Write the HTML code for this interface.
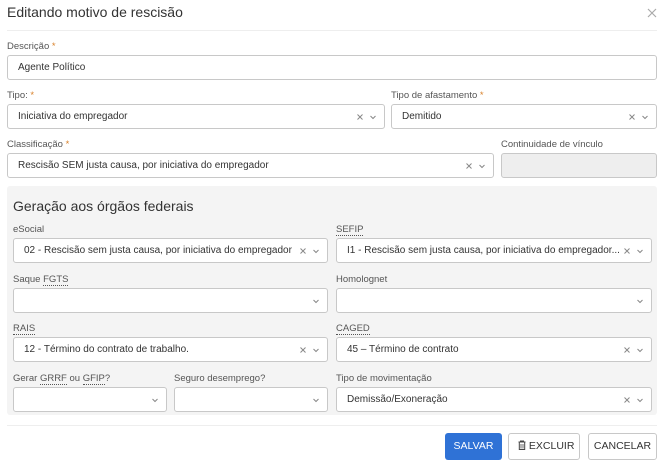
<!DOCTYPE html>
<html><head><meta charset="utf-8"><style>
*{box-sizing:border-box;margin:0;padding:0}
body{width:664px;height:463px;background:#fff;font-family:"Liberation Sans",sans-serif;position:relative;overflow:hidden;color:#333}
.a{position:absolute}
.t{font-size:14px;color:#333}
.l{position:absolute;font-size:9.5px;color:#555;white-space:nowrap}
.l b{color:#d9822b;font-weight:normal}
.u{border-bottom:1px dotted #555}
.i{position:absolute;height:25px;background:#fff;border:1px solid #c8c8c8;border-radius:3px;font-size:10px;color:#333;padding:0 10px;line-height:23px;white-space:nowrap;overflow:hidden}
.ic{position:absolute;right:7px;top:8px;height:8px;display:flex;gap:5px;align-items:center;background:#fff;padding-left:4px}
</style></head><body>
<svg width="0" height="0" style="position:absolute">
<symbol id="x" viewBox="0 0 8 8"><path d="M1.5 1.5L6.5 6.5M6.5 1.5L1.5 6.5" stroke="#888" stroke-width="1"/></symbol>
<symbol id="c" viewBox="0 0 8 8"><path d="M1.5 3L4 5.5L6.5 3" stroke="#888" stroke-width="1" fill="none"/></symbol>
</svg>
<div class="a t" style="left:7px;top:4px">Editando motivo de rescisão</div>
<svg class="a" style="left:647px;top:8px" width="10" height="10" viewBox="0 0 10 10"><path d="M1 1L9 9M9 1L1 9" stroke="#aaa" stroke-width="1.2"/></svg>
<div class="a" style="left:7px;top:30px;width:650px;height:1px;background:#eee"></div>

<div class="l" style="left:7px;top:41px">Descrição <b>*</b></div>
<div class="i" style="left:7px;top:55px;width:650px">Agente Político</div>

<div class="l" style="left:7px;top:90px">Tipo: <b>*</b></div>
<div class="i" style="left:7px;top:104px;width:378px">Iniciativa do empregador<span class="ic"><svg width="8" height="8"><use href="#x"/></svg><svg width="8" height="8"><use href="#c"/></svg></span></div>
<div class="l" style="left:391px;top:90px">Tipo de afastamento <b>*</b></div>
<div class="i" style="left:391px;top:104px;width:266px">Demitido<span class="ic"><svg width="8" height="8"><use href="#x"/></svg><svg width="8" height="8"><use href="#c"/></svg></span></div>

<div class="l" style="left:7px;top:139px">Classificação <b>*</b></div>
<div class="i" style="left:7px;top:153px;width:487px">Rescisão SEM justa causa, por iniciativa do empregador<span class="ic"><svg width="8" height="8"><use href="#x"/></svg><svg width="8" height="8"><use href="#c"/></svg></span></div>
<div class="l" style="left:501px;top:139px">Continuidade de vínculo</div>
<div class="i" style="left:501px;top:153px;width:156px;background:#eee"></div>

<div class="a" style="left:7px;top:186px;width:650px;height:229px;background:#f4f4f4;border-radius:3px"></div>
<div class="a t" style="left:13px;top:198px">Geração aos órgãos federais</div>

<div class="l" style="left:13px;top:224px">eSocial</div>
<div class="i" style="left:13px;top:238px;width:315px">02 - Rescisão sem justa causa, por iniciativa do empregador<span class="ic"><svg width="8" height="8"><use href="#x"/></svg><svg width="8" height="8"><use href="#c"/></svg></span></div>
<div class="l" style="left:336px;top:224px"><span class="u">SEFIP</span></div>
<div class="i" style="left:336px;top:238px;width:316px">I1 - Rescisão sem justa causa, por iniciativa do empregador...<span class="ic"><svg width="8" height="8"><use href="#x"/></svg><svg width="8" height="8"><use href="#c"/></svg></span></div>

<div class="l" style="left:13px;top:274px">Saque <span class="u">FGTS</span></div>
<div class="i" style="left:13px;top:288px;width:315px"><span class="ic"><svg width="8" height="8"><use href="#c"/></svg></span></div>
<div class="l" style="left:336px;top:274px">Homolognet</div>
<div class="i" style="left:336px;top:288px;width:316px"><span class="ic"><svg width="8" height="8"><use href="#c"/></svg></span></div>

<div class="l" style="left:13px;top:323px"><span class="u">RAIS</span></div>
<div class="i" style="left:13px;top:337px;width:315px">12 - Término do contrato de trabalho.<span class="ic"><svg width="8" height="8"><use href="#x"/></svg><svg width="8" height="8"><use href="#c"/></svg></span></div>
<div class="l" style="left:336px;top:323px"><span class="u">CAGED</span></div>
<div class="i" style="left:336px;top:337px;width:316px">45 – Término de contrato<span class="ic"><svg width="8" height="8"><use href="#x"/></svg><svg width="8" height="8"><use href="#c"/></svg></span></div>

<div class="l" style="left:13px;top:373px">Gerar <span class="u">GRRF</span> ou <span class="u">GFIP</span>?</div>
<div class="i" style="left:13px;top:387px;width:154px"><span class="ic"><svg width="8" height="8"><use href="#c"/></svg></span></div>
<div class="l" style="left:174px;top:373px">Seguro desemprego?</div>
<div class="i" style="left:174px;top:387px;width:154px"><span class="ic"><svg width="8" height="8"><use href="#c"/></svg></span></div>
<div class="l" style="left:336px;top:373px">Tipo de movimentação</div>
<div class="i" style="left:336px;top:387px;width:316px">Demissão/Exoneração<span class="ic"><svg width="8" height="8"><use href="#x"/></svg><svg width="8" height="8"><use href="#c"/></svg></span></div>

<div class="a" style="left:7px;top:425px;width:650px;height:1px;background:#eee"></div>
<div class="a" style="left:445px;top:433px;width:57px;height:27px;background:#2f72d6;border-radius:3px;color:#fff;font-size:10.5px;line-height:27px;text-align:center">SALVAR</div>
<div class="a" style="left:508px;top:433px;width:72px;height:27px;border:1px solid #c8c8c8;border-radius:3px;font-size:10.5px;line-height:25px;color:#333;padding-left:9px;white-space:nowrap"><svg width="8" height="10" viewBox="0 0 8 10" style="vertical-align:-1px"><path d="M0.5 2H7.5M2.5 2V1H5.5V2M1.3 2.5V9.5H6.7V2.5" stroke="#444" fill="none" stroke-width="1"/><path d="M3 4V8.5M5 4V8.5" stroke="#444" stroke-width="0.8"/></svg> EXCLUIR</div>
<div class="a" style="left:588px;top:433px;width:69px;height:27px;border:1px solid #c8c8c8;border-radius:3px;font-size:10.5px;line-height:25px;color:#333;text-align:center">CANCELAR</div>
</body></html>
